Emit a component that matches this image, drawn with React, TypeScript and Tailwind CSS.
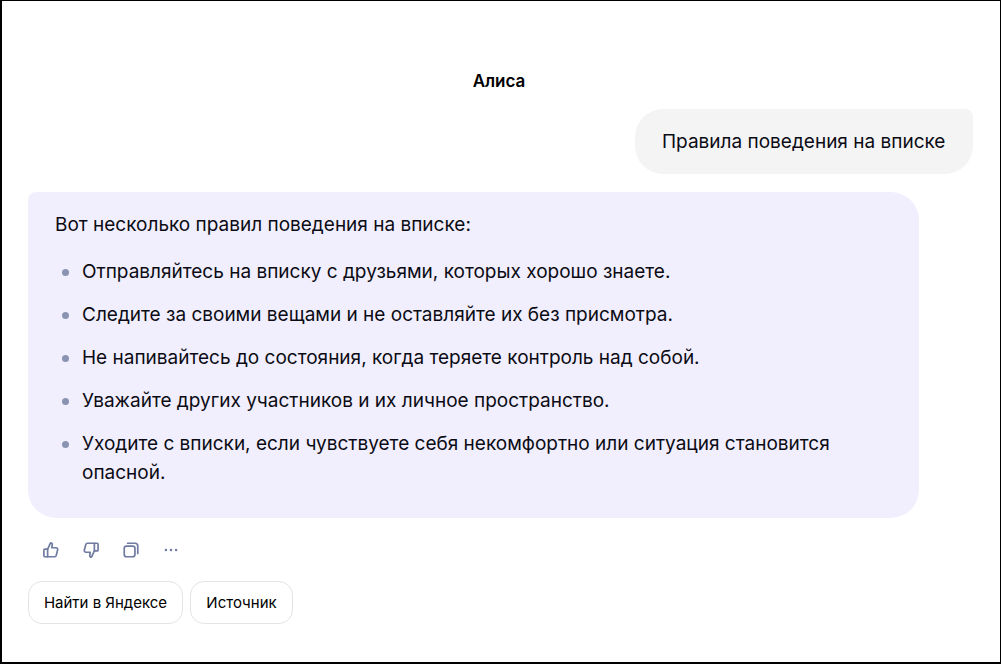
import React from "react";

const items = [
  "Отправляйтесь на вписку с друзьями, которых хорошо знаете.",
  "Следите за своими вещами и не оставляйте их без присмотра.",
  "Не напивайтесь до состояния, когда теряете контроль над собой.",
  "Уважайте других участников и их личное пространство.",
  "Уходите с вписки, если чувствуете себя некомфортно или ситуация становится опасной.",
];

export default function App() {
  return (
    <div className="w-[1001px] h-[664px] bg-white border border-black border-b-2 border-l-2 font-['Inter',sans-serif] text-[#0b0b14] overflow-hidden flex flex-col">
      <div className="h-[50px] mt-[55px] pt-[2px] pr-[4px] flex items-center justify-center text-[17px] font-semibold text-black">Алиса</div>
      <div className="flex justify-end pr-[27px] mt-[3px]">
        <div className="w-[338px] h-[65px] bg-[#f4f4f5] rounded-[28px] rounded-tr-[8px] flex items-center pl-[27px] pt-[2px] text-[19px] whitespace-nowrap">Правила поведения на вписке</div>
      </div>
      <div className="ml-[26px] mt-[18px] w-[891px] h-[326px] bg-[#f1effd] rounded-[28px] rounded-tl-[8px] pt-[18px] pl-[27px] pr-[60px] text-[19px] leading-[29px]">
        <p>Вот несколько правил поведения на вписке:</p>
        <ul className="mt-[18px] flex flex-col gap-[14px]">
          {items.map((t) => (
            <li key={t} className="flex">
              <span className="w-[7px] h-[7px] rounded-full bg-[#8b93b2] mt-[12px] ml-[7px] mr-[13px] shrink-0" />
              <span>{t}</span>
            </li>
          ))}
        </ul>
      </div>
      <div className="ml-[40px] mt-[23px] flex items-center gap-[22px] text-[#6f7ba0]">
        <svg width="18" height="18" viewBox="0 0 16 16" fill="none" stroke="currentColor" strokeWidth="1.5" strokeLinejoin="round" strokeLinecap="round">
          <path d="M5 7.2 7.6 1.6c1 0 1.7.8 1.5 1.9L8.7 6h3.8c1 0 1.7.9 1.4 1.9l-1.3 5c-.2.7-.8 1.1-1.400 1.100H5z" />
          <path d="M5 7.200H2.600c-.5 0-.9.4-.9.9v5c0 .5.4.9.9.9H5" />
        </svg>
        <svg width="18" height="18" viewBox="0 0 16 16" fill="none" stroke="currentColor" strokeWidth="1.5" strokeLinejoin="round" strokeLinecap="round">
          <path d="M11 8.800 8.400 14.400c-1 0-1.700-.8-1.500-1.900L7.300 10H3.500c-1 0-1.700-.9-1.400-1.900l1.300-5C3.600 2.400 4.200 2 4.800 2H11z" />
          <path d="M11 8.800h2.400c.5 0 .9-.4.9-.9V2.900c0-.5-.4-.9-.9-.9H11" />
        </svg>
        <svg width="18" height="18" viewBox="0 0 16 16" fill="none" stroke="currentColor" strokeWidth="1.5" strokeLinejoin="round">
          <rect x="2" y="4.500" width="9.500" height="9.500" rx="2" />
          <path d="M5 2h6.500A2.500 2.500 0 0 1 14 4.500V11" strokeLinecap="round" />
        </svg>
        <svg width="18" height="18" viewBox="0 0 16 16" fill="currentColor">
          <circle cx="3.500" cy="8" r="1.100" />
          <circle cx="8" cy="8" r="1.100" />
          <circle cx="12.500" cy="8" r="1.100" />
        </svg>
      </div>
      <div className="ml-[26px] mt-[22px] flex gap-[7px] text-[15px] text-black">
        <div className="w-[155px] h-[43px] pt-[1px] flex items-center justify-center border border-[#e4e4e7] rounded-[14px]">Найти в Яндексе</div>
        <div className="w-[103px] h-[43px] pt-[1px] flex items-center justify-center border border-[#e4e4e7] rounded-[14px]">Источник</div>
      </div>
    </div>
  );
}
